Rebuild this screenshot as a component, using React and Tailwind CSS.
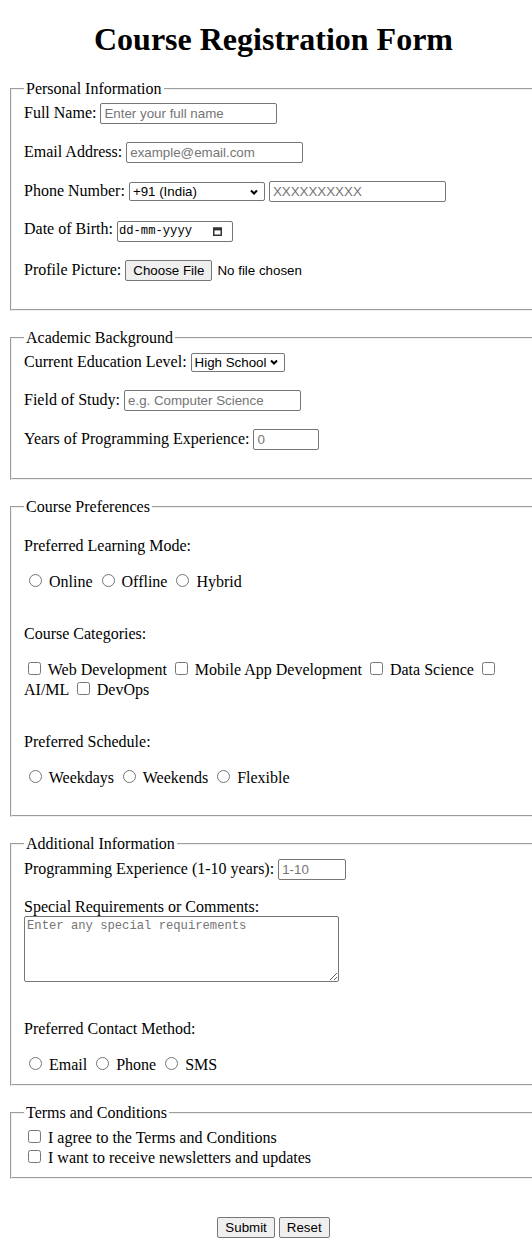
import React from "react";

const textInput =
  "h-[21px] border border-[#767676] rounded-[2px] bg-white px-[3px] font-['Liberation_Sans',Arial,sans-serif] text-[13.33px] leading-[normal] text-black placeholder:text-[#757575] align-baseline outline-none";

function Chevron() {
  return (
    <svg
      width="8"
      height="6"
      viewBox="0 0 8 6"
      className="pointer-events-none absolute right-[7px] top-1/2 -translate-y-1/2"
    >
      <path d="M1 1.5 L4 4.5 L7 1.5" fill="none" stroke="#000" strokeWidth="2" />
    </svg>
  );
}

function Select({ w, children }) {
  return (
    <span className="relative inline-block align-baseline">
      <select
        className={`${w} h-[19px] appearance-none border border-[#767676] rounded-[2px] bg-white pl-[3px] pr-[16px] font-['Liberation_Sans',Arial,sans-serif] text-[13.33px] leading-[normal] text-black align-baseline outline-none`}
      >
        {children}
      </select>
      <Chevron />
    </span>
  );
}

function Radio({ name }) {
  return (
    <input
      type="radio"
      name={name}
      className="h-[13px] w-[13px] mt-[3px] mr-[3px] ml-[5px] mb-0 align-baseline"
    />
  );
}

function Check() {
  return (
    <input
      type="checkbox"
      className="h-[13px] w-[13px] mt-[3px] mr-[3px] mb-[3px] ml-[4px] align-baseline"
    />
  );
}

function Blank() {
  return <div className="h-[18px]" />;
}

function Fieldset({ legend, children }) {
  return (
    <fieldset className="mx-[2px] border-2 [border-style:groove] border-[#f0f0f0] px-3 pt-[5.6px] pb-[10px] min-w-0">
      <legend className="px-[2px]">{legend}</legend>
      {children}
    </fieldset>
  );
}

function Btn({ children }) {
  return (
    <button className="h-[21px] border border-[#767676] rounded-[2px] bg-[#efefef] px-[7px] font-['Liberation_Sans',Arial,sans-serif] text-[13.33px] leading-[normal] text-black align-baseline">
      {children}
    </button>
  );
}

export default function App() {
  return (
    <div className="w-full overflow-hidden bg-white text-black font-['Liberation_Serif','Times_New_Roman',serif] text-[16px] leading-[normal]">
      <div className="w-[547px] px-2 pb-2">
        <h1 className="my-[21.44px] text-center text-[32px] font-bold leading-[normal]">
          Course Registration Form
        </h1>

        <Fieldset legend="Personal Information">
          <div>
            <label>Full Name:</label>{" "}
            <input type="text" placeholder="Enter your full name" className={`${textInput} w-[177px]`} />
          </div>
          <Blank />
          <div>
            <label>Email Address:</label>{" "}
            <input type="text" placeholder="example@email.com" className={`${textInput} w-[177px]`} />
          </div>
          <Blank />
          <div>
            <label>Phone Number:</label>{" "}
            <Select w="w-[136px]">
              <option>+91 (India)</option>
              <option>+1 (USA)</option>
              <option>+44 (UK)</option>
            </Select>{" "}
            <input type="text" placeholder="XXXXXXXXXX" className={`${textInput} w-[177px]`} />
          </div>
          <Blank />
          <div>
            <label>Date of Birth:</label>{" "}
            <span className="inline-flex h-[21px] w-[116px] items-center justify-between border border-[#767676] rounded-[2px] bg-white pl-[1px] pr-[10px] align-baseline font-['Liberation_Mono',monospace] text-[12.2px] leading-[normal]">
              <span>dd-mm-yyyy</span>
              <svg width="9" height="9" viewBox="0 0 9 9">
                <rect x="0.75" y="1" width="7.5" height="7.25" fill="none" stroke="#333" strokeWidth="1.5" />
                <rect x="0.75" y="1" width="7.5" height="2.4" fill="#333" />
              </svg>
            </span>
          </div>
          <Blank />
          <div>
            <label>Profile Picture:</label>{" "}
            <Btn>Choose File</Btn>
            <span className="ml-[5px] font-['Liberation_Sans',Arial,sans-serif] text-[13.33px]">No file chosen</span>
          </div>
          <Blank />
        </Fieldset>

        <Blank />

        <Fieldset legend="Academic Background">
          <div>
            <label>Current Education Level:</label>{" "}
            <Select w="w-[94px]">
              <option>High School</option>
              <option>Bachelor's</option>
              <option>Master's</option>
            </Select>
          </div>
          <Blank />
          <div>
            <label>Field of Study:</label>{" "}
            <input type="text" placeholder="e.g. Computer Science" className={`${textInput} w-[177px]`} />
          </div>
          <Blank />
          <div>
            <label>Years of Programming Experience:</label>{" "}
            <input type="text" placeholder="0" className={`${textInput} w-[66px]`} />
          </div>
          <Blank />
        </Fieldset>

        <Blank />

        <Fieldset legend="Course Preferences">
          <p className="my-4">Preferred Learning Mode:</p>
          <div>
            <Radio name="mode" /> <label>Online</label> <Radio name="mode" /> <label>Offline</label>{" "}
            <Radio name="mode" /> <label>Hybrid</label>
          </div>
          <Blank />
          <p className="my-4">Course Categories:</p>
          <div>
            <Check /> <label>Web Development</label> <Check /> <label>Mobile App Development</label>{" "}
            <Check /> <label>Data Science</label> <Check /> <label>AI/ML</label> <Check />{" "}
            <label>DevOps</label>
          </div>
          <Blank />
          <p className="my-4">Preferred Schedule:</p>
          <div>
            <Radio name="sched" /> <label>Weekdays</label> <Radio name="sched" /> <label>Weekends</label>{" "}
            <Radio name="sched" /> <label>Flexible</label>
          </div>
          <Blank />
        </Fieldset>

        <Blank />

        <Fieldset legend="Additional Information">
          <div>
            <label>Programming Experience (1-10 years):</label>{" "}
            <input type="text" placeholder="1-10" className={`${textInput} w-[68px]`} />
          </div>
          <Blank />
          <div>
            <label>Special Requirements or Comments:</label>
          </div>
          <div>
            <textarea
              placeholder="Enter any special requirements"
              className="h-[66px] w-[315px] border border-[#767676] rounded-[2px] bg-white p-[2px] font-['Liberation_Mono',monospace] text-[12.2px] leading-[normal] text-black placeholder:text-[#757575] align-baseline outline-none"
            />
          </div>
          <Blank />
          <p className="my-4">Preferred Contact Method:</p>
          <div>
            <Radio name="contact" /> <label>Email</label> <Radio name="contact" /> <label>Phone</label>{" "}
            <Radio name="contact" /> <label>SMS</label>
          </div>
        </Fieldset>

        <Blank />

        <Fieldset legend="Terms and Conditions">
          <div>
            <Check /> <label>I agree to the Terms and Conditions</label>
          </div>
          <div>
            <Check /> <label>I want to receive newsletters and updates</label>
          </div>
        </Fieldset>

        <div className="h-[38px]" />

        <div className="text-center">
          <Btn>Submit</Btn> <Btn>Reset</Btn>
        </div>
      </div>
    </div>
  );
}
